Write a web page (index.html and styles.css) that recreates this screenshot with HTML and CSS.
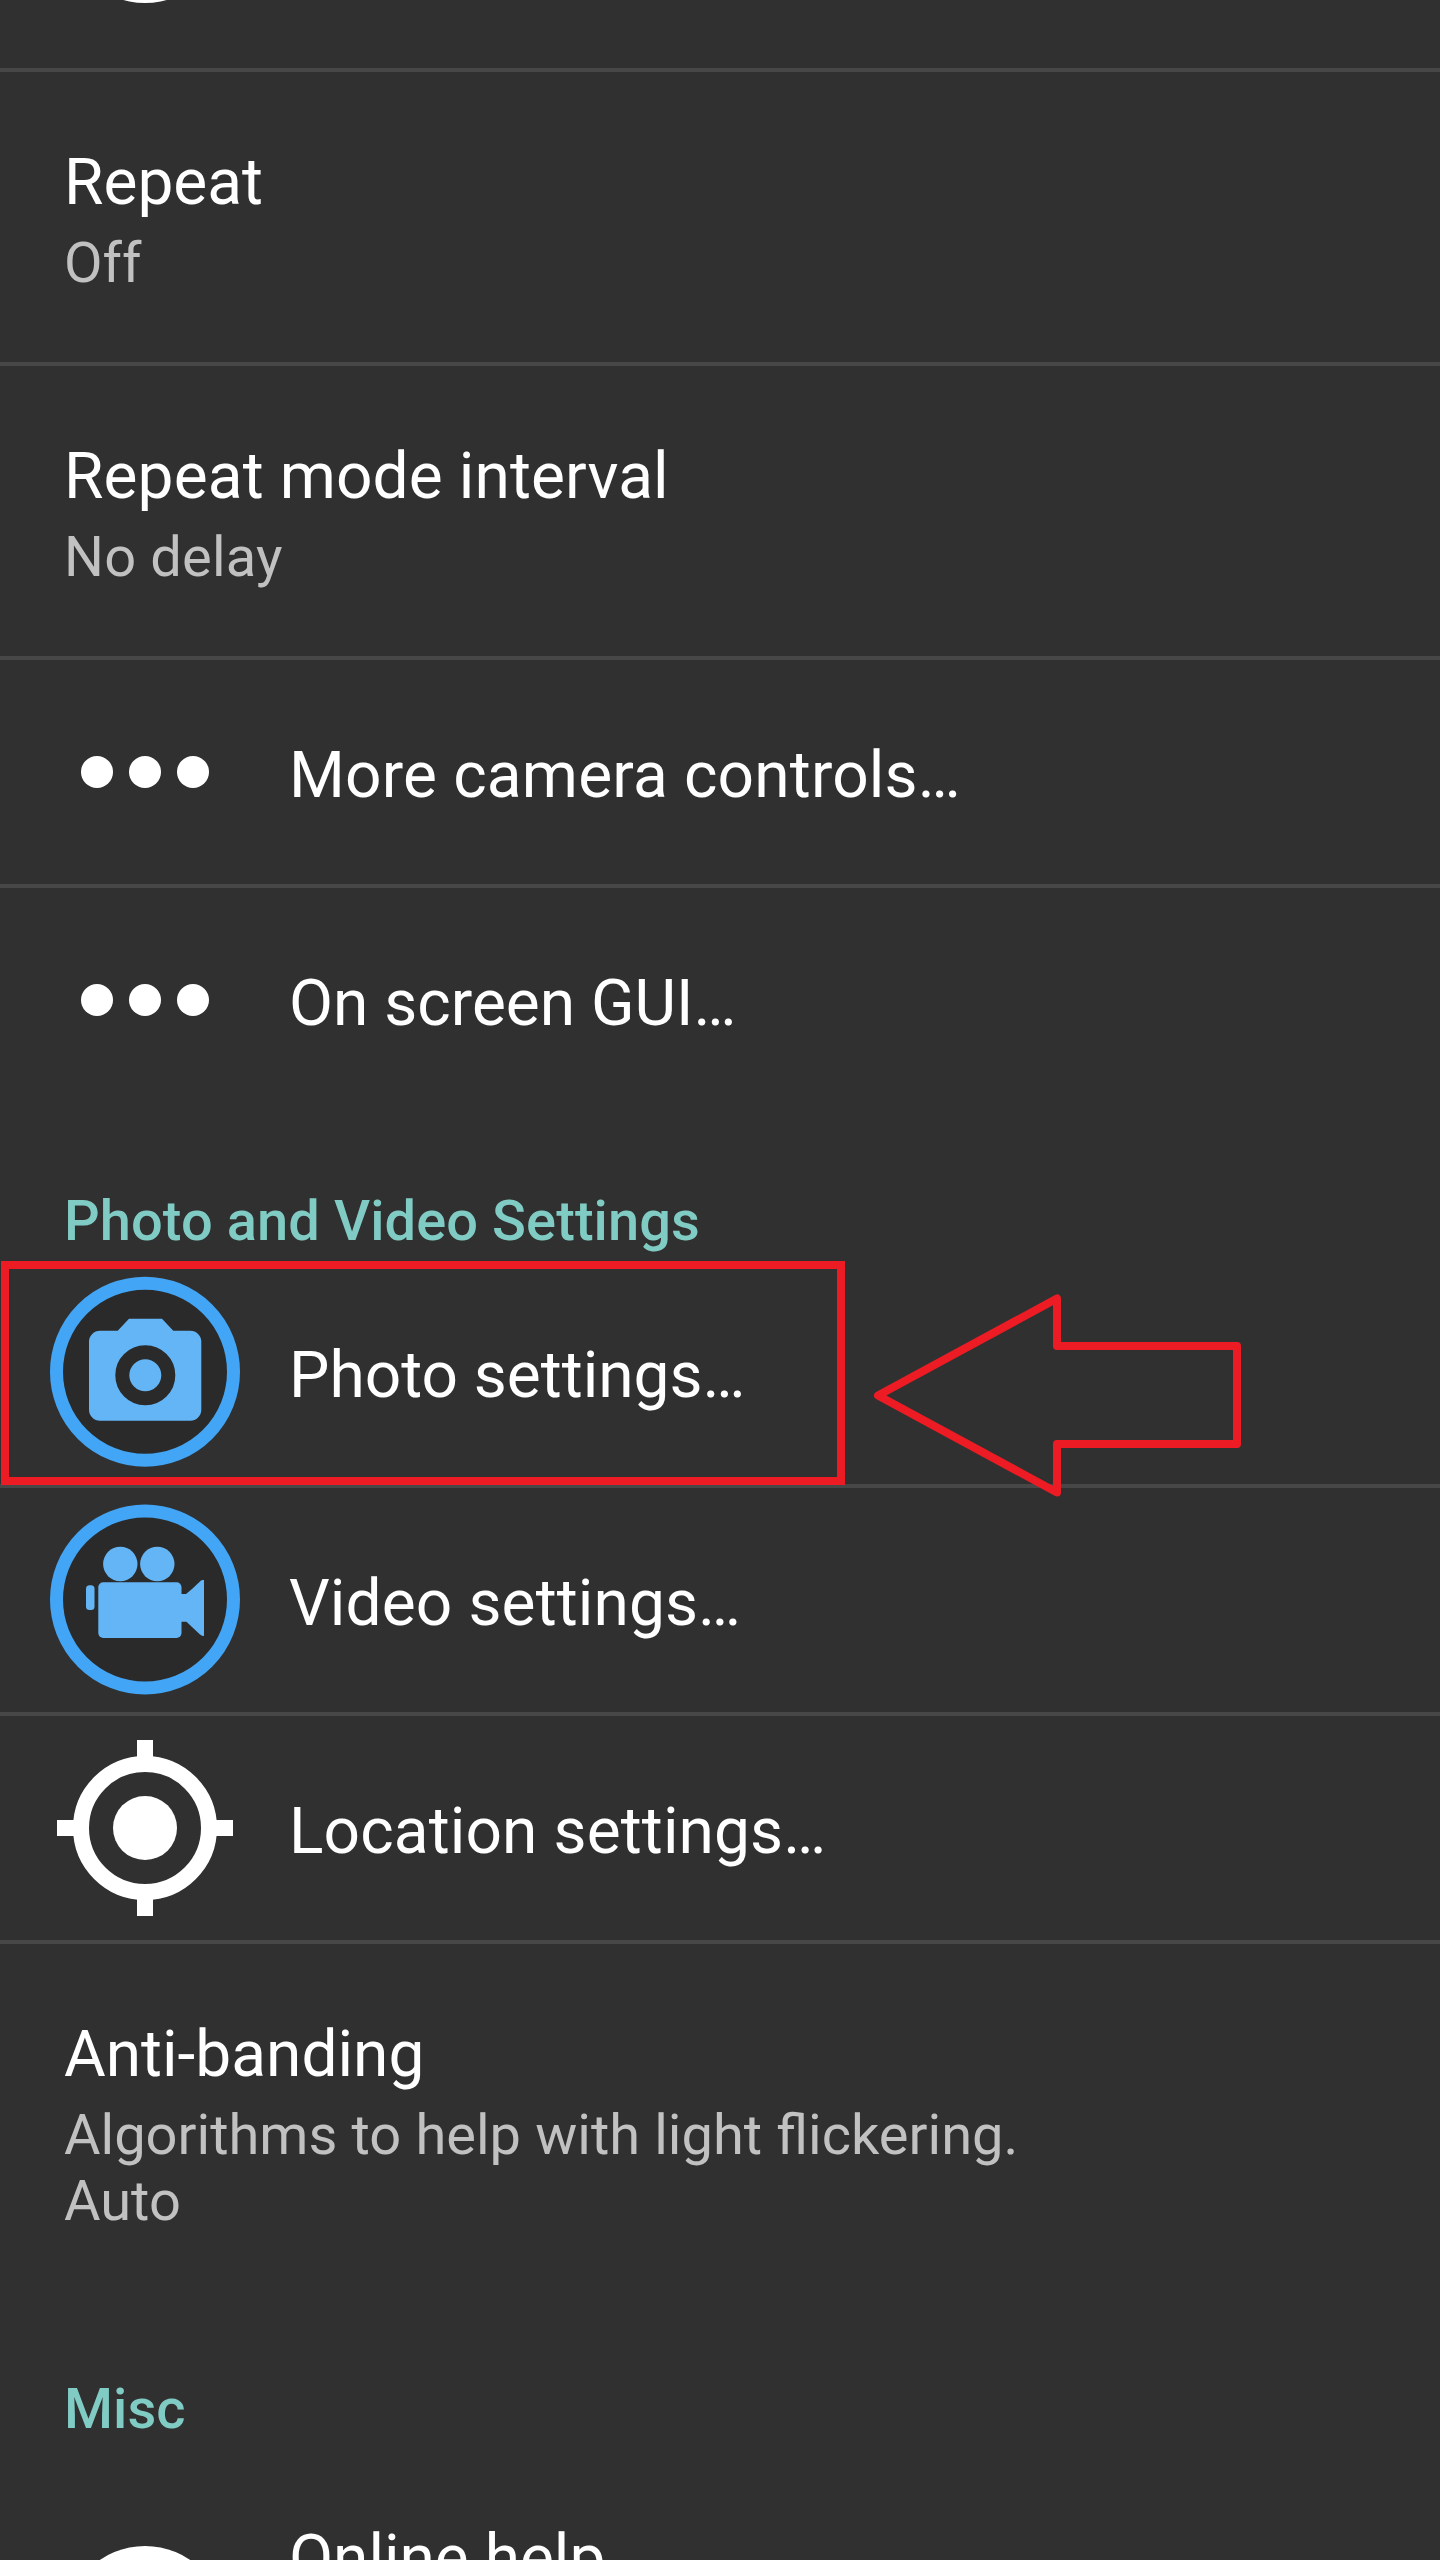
FILE: index.html
```html
<!DOCTYPE html>
<html lang="en">
<head>
<meta charset="utf-8">
<title>Settings</title>
<link rel="stylesheet" href="styles.css">
</head>
<body>
<main class="screen">
  <div class="row row-top">
    <svg class="icon" viewBox="0 0 192 192"><circle cx="96" cy="96" r="80" fill="#fff"/></svg>
  </div>
  <div class="row two-line">
    <div class="title">Repeat</div>
    <div class="summary">Off</div>
  </div>
  <div class="row two-line">
    <div class="title track">Repeat mode interval</div>
    <div class="summary track-wide">No delay</div>
  </div>
  <div class="row icon-row">
    <svg class="icon" viewBox="0 0 192 192" fill="#fff"><circle cx="48" cy="96" r="16"/><circle cx="96" cy="96" r="16"/><circle cx="144" cy="96" r="16"/></svg>
    <div class="title track-wide">More camera controls…</div>
  </div>
  <div class="row icon-row last">
    <svg class="icon" viewBox="0 0 192 192" fill="#fff"><circle cx="48" cy="96" r="16"/><circle cx="96" cy="96" r="16"/><circle cx="144" cy="96" r="16"/></svg>
    <div class="title">On screen GUI…</div>
  </div>

  <h2 class="section">Photo and Video Settings</h2>
  <div class="row icon-row">
    <svg class="icon" viewBox="0 0 192 192">
      <circle cx="96" cy="95.7" r="88.5" fill="#2a2a2a" stroke="#42a5f5" stroke-width="13"/>
      <path fill="#64b5f6" d="M80 42.7H113L124.3 54.7H141.3A11 11 0 0 1 152.3 65.7V133.7A11 11 0 0 1 141.3 144.7H51A11 11 0 0 1 40 133.7V65.7A11 11 0 0 1 51 54.7H68.7Z"/>
      <circle cx="96.3" cy="99.3" r="23" fill="#64b5f6" stroke="#2a2a2a" stroke-width="14"/>
    </svg>
    <div class="title">Photo settings…</div>
  </div>
  <div class="row icon-row">
    <svg class="icon" viewBox="0 0 192 192">
      <circle cx="96" cy="95.5" r="88.5" fill="#2a2a2a" stroke="#42a5f5" stroke-width="13"/>
      <g fill="#64b5f6">
        <circle cx="71.3" cy="60" r="17.2"/>
        <circle cx="108.3" cy="60" r="17.2"/>
        <rect x="37" y="81.3" width="8.5" height="24.6" rx="3.5"/>
        <rect x="49.3" y="78.3" width="83.2" height="55.7" rx="5"/>
        <path d="M132 90H137L143 85L152 76.5Q153 75.6 155 76V132Q153 132 151 130.5L143 123L137.5 117.7H132Z"/>
      </g>
    </svg>
    <div class="title track">Video settings…</div>
  </div>
  <div class="row icon-row">
    <svg class="icon" viewBox="0 0 192 192">
      <circle cx="96" cy="96" r="32" fill="#fff"/>
      <circle cx="96" cy="96" r="64" fill="none" stroke="#fff" stroke-width="16"/>
      <path fill="#fff" d="M88 8H104V28H88ZM88 164H104V184H88ZM8 88H28V104H8ZM164 88H184V104H164Z"/>
    </svg>
    <div class="title track">Location settings…</div>
  </div>
  <div class="row three-line last">
    <div class="title">Anti-banding</div>
    <div class="summary spaced">Algorithms to help with light flickering.<br>Auto</div>
  </div>

  <h2 class="section">Misc</h2>
  <div class="row row-help last">
    <svg class="icon" viewBox="0 0 192 192"><circle cx="96" cy="96" r="80" fill="#fff"/></svg>
    <div class="title">Online help</div>
  </div>

  <div class="highlight"></div>
  <svg class="arrow" viewBox="0 0 380 210"><path d="M8 105.5L187 8.5V56H367V154H187V202.5Z"/></svg>
</main>
</body>
</html>
```
FILE: styles.css
```css
* { box-sizing: border-box; }

body {
  margin: 0;
  background: #303030;
  color: #fff;
  font-family: Roboto, "Liberation Sans", sans-serif;
}

.screen {
  position: relative;
  display: flex;
  flex-direction: column;
  width: 1440px;
  height: 2560px;
  overflow: hidden;
}

.row {
  flex: none;
  border-bottom: 4px solid #474747;
}

.row.last { border-bottom: 0; }

.two-line,
.three-line {
  height: 294px;
  padding: 73px 64px 0;
}

.three-line { height: 356px; }

.title {
  font-size: 64px;
  line-height: 75px;
  white-space: nowrap;
}

.summary {
  margin-top: 10px;
  color: #c1c1c1;
  font-size: 56px;
  line-height: 66px;
}

.track { letter-spacing: 0.12px; }
.track-wide { letter-spacing: 0.18px; }
.spaced { word-spacing: 0.3px; }

.icon-row,
.row-top,
.row-help {
  display: flex;
  align-items: center;
  gap: 48px;
  height: 228px;
  padding-left: 49px;
}

.icon-row.last { height: 224px; }

.icon-row .title { padding-top: 7px; }

.icon {
  flex: none;
  width: 192px;
  height: 192px;
}

.row-top {
  height: 294px;
  margin-top: -222px;
}

.row-help { height: 356px; }

.row-help .title {
  align-self: flex-start;
  padding-top: 73px;
}

.section {
  flex: none;
  height: 148px;
  margin: 0;
  padding: 76px 64px 0;
  color: #80cbc4;
  font-size: 56px;
  font-weight: 500;
  letter-spacing: 0.08px;
  line-height: 66px;
}

.highlight {
  position: absolute;
  left: 1px;
  top: 1261px;
  width: 844px;
  height: 224px;
  border: 8px solid #ed1c24;
}

.arrow {
  position: absolute;
  left: 870px;
  top: 1290px;
  width: 380px;
  height: 210px;
  fill: none;
  stroke: #ed1c24;
  stroke-width: 8;
  stroke-linejoin: round;
}
```
